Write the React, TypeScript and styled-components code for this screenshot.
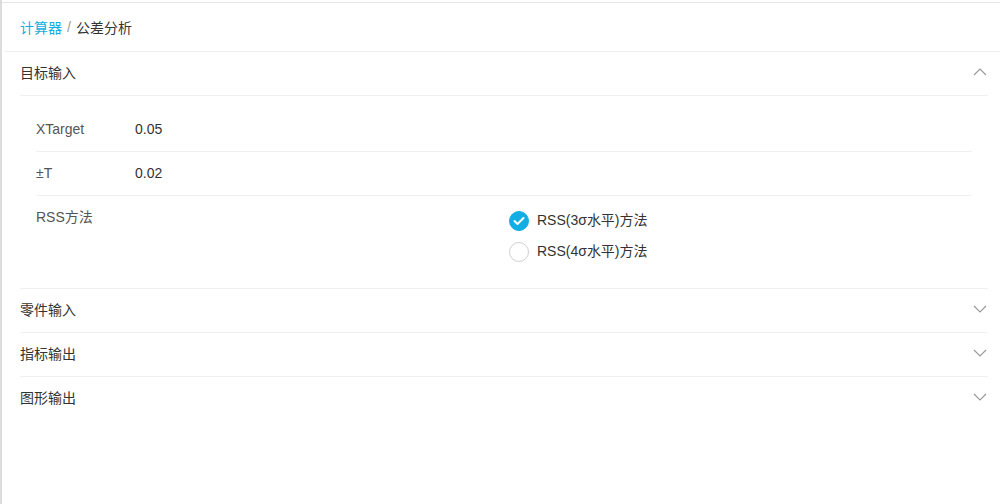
import React from 'react'
import styled, { createGlobalStyle } from 'styled-components'

const GlobalStyle = createGlobalStyle`
  html, body {
    margin: 0;
    padding: 0;
    background: #fff;
  }
  body {
    font-family: "Liberation Sans", Arial, "Noto Sans CJK SC", sans-serif;
    font-size: 14px;
    color: #333;
  }
`

const Page = styled.div`
  min-height: 504px;
  box-sizing: border-box;
  border-left: 2px solid #dcdcdc;
  padding-top: 2px;
`

const Panel = styled.div`
  border-top: 1px solid #e6e6e6;
`

const Breadcrumb = styled.div`
  height: 48px;
  margin-left: 2px;
  padding-left: 16px;
  display: flex;
  align-items: center;
  border-bottom: 1px solid #efefef;
  color: #333;
`

const Crumb = styled.span<{ $link?: boolean }>`
  color: ${({ $link }) => ($link ? '#12aee3' : '#333')};
`

const Sep = styled.span`
  color: #999;
  margin: 0 5px;
`

const Collapse = styled.div`
  margin: 0 12px 0 18px;
`

const Section = styled.div`
  border-bottom: 1px solid #f0f0f0;
  &:last-child {
    border-bottom: none;
  }
`

const SectionHeader = styled.div`
  height: 43px;
  box-sizing: border-box;
  padding-bottom: 3px;
  display: flex;
  align-items: center;
  justify-content: space-between;
  color: #333;
`

const Chevron = styled.svg`
  width: 14px;
  height: 8px;
  margin-right: 1px;
`

const SectionBody = styled.div`
  border-top: 1px solid #f0f0f0;
  padding: 12px 16px 26px;
`

const Row = styled.div<{ $split?: boolean }>`
  display: grid;
  grid-template-columns: ${({ $split }) => ($split ? '1fr 1fr' : '99px 1fr')};
  align-items: start;
  min-height: 43px;
  line-height: 43px;
  & + & {
    border-top: 1px solid #f0f0f0;
  }
`

const Label = styled.div`
  color: #555;
`

const Value = styled.div`
  color: #333;
`

const RadioGroup = styled.div`
  display: flex;
  flex-direction: column;
  gap: 10px;
  padding: 14px 0 0 5px;
  line-height: 21px;
`

const RadioItem = styled.label`
  display: flex;
  align-items: center;
  gap: 8px;
  color: #333;
`

const RadioDot = styled.span<{ $checked?: boolean }>`
  width: 20px;
  height: 20px;
  border-radius: 50%;
  box-sizing: border-box;
  display: inline-flex;
  align-items: center;
  justify-content: center;
  background: ${({ $checked }) => ($checked ? '#12aee3' : '#fff')};
  border: 1px solid ${({ $checked }) => ($checked ? '#12aee3' : '#d0d0d0')};
`

function ChevronIcon({ up }: { up?: boolean }) {
  return (
    <Chevron viewBox="0 0 14 8">
      <polyline
        points={up ? '1,7 7,1 13,7' : '1,1 7,7 13,1'}
        fill="none"
        stroke="#9a9a9a"
        strokeWidth="1.2"
      />
    </Chevron>
  )
}

function Radio({ checked, label }: { checked?: boolean; label: string }) {
  return (
    <RadioItem>
      <RadioDot $checked={checked}>
        {checked && (
          <svg width="12" height="10" viewBox="0 0 12 10">
            <polyline points="1.5,5 4.5,8 10.5,2" fill="none" stroke="#fff" strokeWidth="2" strokeLinecap="round" strokeLinejoin="round" />
          </svg>
        )}
      </RadioDot>
      {label}
    </RadioItem>
  )
}

const closedSections = ['零件输入', '指标输出', '图形输出']

export default function App() {
  return (
    <>
      <GlobalStyle />
      <Page>
        <Panel>
          <Breadcrumb>
            <Crumb $link>计算器</Crumb>
            <Sep>/</Sep>
            <Crumb>公差分析</Crumb>
          </Breadcrumb>
          <Collapse>
            <Section>
              <SectionHeader>
                <span>目标输入</span>
                <ChevronIcon up />
              </SectionHeader>
              <SectionBody>
                <Row>
                  <Label>XTarget</Label>
                  <Value>0.05</Value>
                </Row>
                <Row>
                  <Label>±T</Label>
                  <Value>0.02</Value>
                </Row>
                <Row $split>
                  <Label>RSS方法</Label>
                  <RadioGroup>
                    <Radio checked label="RSS(3σ水平)方法" />
                    <Radio label="RSS(4σ水平)方法" />
                  </RadioGroup>
                </Row>
              </SectionBody>
            </Section>
            {closedSections.map((title) => (
              <Section key={title}>
                <SectionHeader>
                  <span>{title}</span>
                  <ChevronIcon />
                </SectionHeader>
              </Section>
            ))}
          </Collapse>
        </Panel>
      </Page>
    </>
  )
}
